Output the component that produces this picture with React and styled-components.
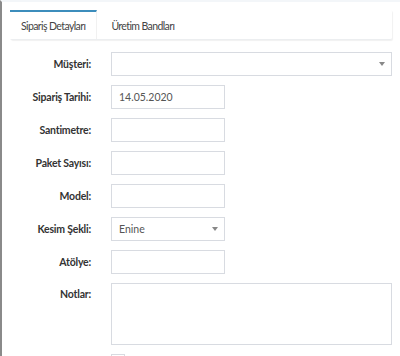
import React from 'react';
import styled, { createGlobalStyle } from 'styled-components';

const GlobalStyle = createGlobalStyle`
    html, body {
        margin: 0;
        padding: 0;
        background: #fff;
        font-family: Lato, "Open Sans", sans-serif;
        color: #333;
    }
`;

const Page = styled.div`
    min-height: 356px;
    border-left: 2px solid #8a8a8a;
    border-top: 2px solid #f3f6f9;
    box-sizing: border-box;
    padding: 8px 8px 0 8px;
`;

const TabBar = styled.div`
    display: flex;
    height: 29px;
    background: #fff;
    border-bottom: 1px solid #eceef0;
    box-shadow: 1px 1px 1px rgba(0, 0, 0, 0.06);
    border-radius: 2px;
`;

const Tab = styled.div`
    display: flex;
    align-items: center;
    padding: 0 11px;
    margin-right: 3px;
    font-size: 10.5px;
    letter-spacing: -0.6px;
    color: #444;
    background: ${(p) => (p.active ? '#fff' : 'transparent')};
    border-top: 2px solid ${(p) => (p.active ? '#3c8dbc' : 'transparent')};
    border-right: 1px solid ${(p) => (p.active ? '#f1f1f1' : 'transparent')};
    box-sizing: border-box;
`;

const Form = styled.div`
    display: flex;
    flex-direction: column;
    gap: 9px;
    padding-top: 12px;
`;

const Row = styled.div`
    display: grid;
    grid-template-columns: 81px 1fr;
    column-gap: 20px;
    align-items: ${(p) => (p.top ? 'start' : 'center')};
`;

const Label = styled.label`
    text-align: right;
    font-size: 10.5px;
    letter-spacing: -0.2px;
    font-weight: 700;
    color: #333;
    padding-top: ${(p) => (p.top ? '5px' : '0')};
`;

const Field = styled.div`
    position: relative;
    width: ${(p) => (p.wide ? '281px' : '114px')};
    height: ${(p) => p.h || 24}px;
    border: 1px solid #d8dbe1;
    box-sizing: border-box;
    background: #fff;
    display: flex;
    align-items: center;
    padding: 0 7px;
    font-size: 10.5px;
    color: #555;
`;

const Caret = styled.span`
    position: absolute;
    right: 6px;
    top: 50%;
    margin-top: -2px;
    width: 0;
    height: 0;
    border-left: 3.5px solid transparent;
    border-right: 3.5px solid transparent;
    border-top: 4px solid #888;
`;

const Check = styled.div`
    width: 14px;
    height: 14px;
    border: 1px solid #d8dbe1;
    box-sizing: border-box;
`;

const fields = [
    { label: 'Müşteri:', wide: true, select: true },
    { label: 'Sipariş Tarihi:', value: '14.05.2020' },
    { label: 'Santimetre:' },
    { label: 'Paket Sayısı:' },
    { label: 'Model:' },
    { label: 'Kesim Şekli:', value: 'Enine', select: true },
    { label: 'Atölye:' },
];

export default function App() {
    return (
        <Page>
            <GlobalStyle />
            <TabBar>
                <Tab active>Sipariş Detayları</Tab>
                <Tab>Üretim Bandları</Tab>
            </TabBar>
            <Form>
                {fields.map((f) => (
                    <Row key={f.label}>
                        <Label>{f.label}</Label>
                        <Field wide={f.wide}>
                            {f.value}
                            {f.select && <Caret />}
                        </Field>
                    </Row>
                ))}
                <Row top>
                    <Label top>Notlar:</Label>
                    <Field wide h={62} />
                </Row>
                <Row>
                    <span />
                    <Check />
                </Row>
            </Form>
        </Page>
    );
}
